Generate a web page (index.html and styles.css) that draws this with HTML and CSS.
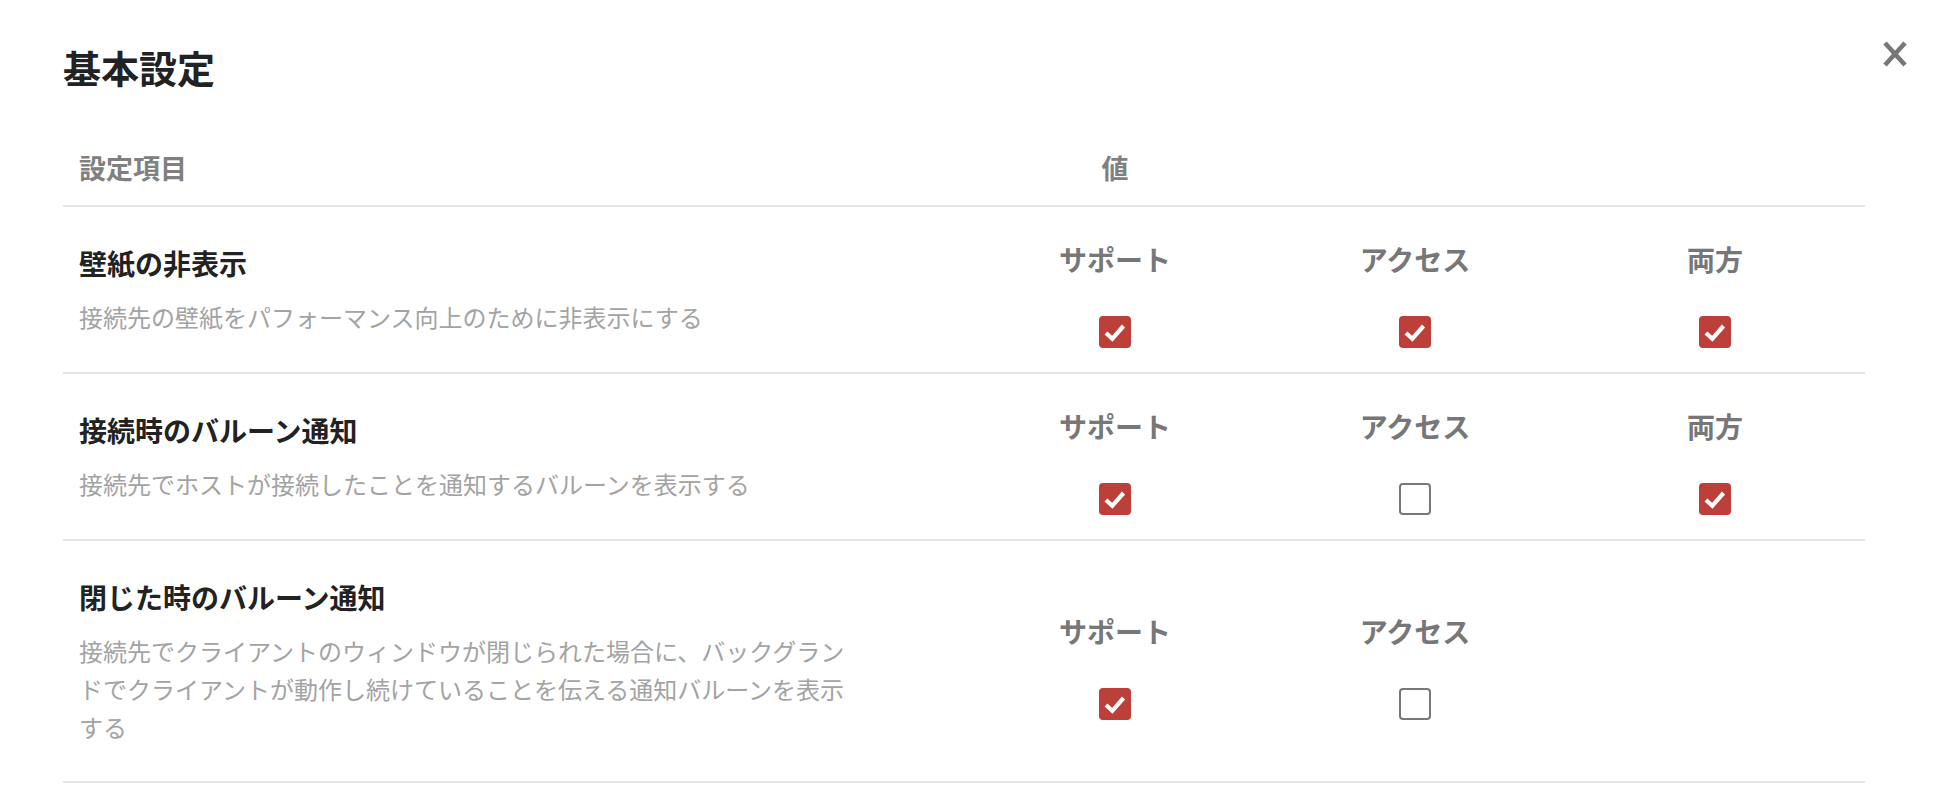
FILE: index.html
```html
<!DOCTYPE html>
<html lang="ja">
<head>
<meta charset="utf-8">
<title>基本設定</title>
<link rel="stylesheet" href="styles.css">
</head>
<body>
<div class="dialog">
  <button class="close" aria-label="閉じる">
    <svg width="24" height="26" viewBox="0 0 24 26"><path d="M2 2 L22 24 M22 2 L2 24" stroke="#777" stroke-width="4.6" fill="none"/></svg>
  </button>
  <h1 class="title">基本設定</h1>
  <div class="table">
    <div class="row head">
      <div class="hcell">設定項目</div>
      <div class="hcell center">値</div>
      <div></div>
      <div></div>
    </div>

    <div class="row">
      <div class="lcell">
        <div class="ltitle">壁紙の非表示</div>
        <div class="ldesc">接続先の壁紙をパフォーマンス向上のために非表示にする</div>
      </div>
      <div class="vcell"><div class="vlabel">サポート</div><span class="cb on"><svg viewBox="0 0 32 32"><path d="M7 17 L13.3 22.8 L24.5 10" stroke="#fff" stroke-width="4.2" fill="none"/></svg></span></div>
      <div class="vcell"><div class="vlabel">アクセス</div><span class="cb on"><svg viewBox="0 0 32 32"><path d="M7 17 L13.3 22.8 L24.5 10" stroke="#fff" stroke-width="4.2" fill="none"/></svg></span></div>
      <div class="vcell"><div class="vlabel">両方</div><span class="cb on"><svg viewBox="0 0 32 32"><path d="M7 17 L13.3 22.8 L24.5 10" stroke="#fff" stroke-width="4.2" fill="none"/></svg></span></div>
    </div>

    <div class="row">
      <div class="lcell">
        <div class="ltitle">接続時のバルーン通知</div>
        <div class="ldesc">接続先でホストが接続したことを通知するバルーンを表示する</div>
      </div>
      <div class="vcell"><div class="vlabel">サポート</div><span class="cb on"><svg viewBox="0 0 32 32"><path d="M7 17 L13.3 22.8 L24.5 10" stroke="#fff" stroke-width="4.2" fill="none"/></svg></span></div>
      <div class="vcell"><div class="vlabel">アクセス</div><span class="cb"></span></div>
      <div class="vcell"><div class="vlabel">両方</div><span class="cb on"><svg viewBox="0 0 32 32"><path d="M7 17 L13.3 22.8 L24.5 10" stroke="#fff" stroke-width="4.2" fill="none"/></svg></span></div>
    </div>

    <div class="row">
      <div class="lcell">
        <div class="ltitle">閉じた時のバルーン通知</div>
        <div class="ldesc">接続先でクライアントのウィンドウが閉じられた場合に、バックグランドでクライアントが動作し続けていることを伝える通知バルーンを表示する</div>
      </div>
      <div class="vcell"><div class="vlabel">サポート</div><span class="cb on"><svg viewBox="0 0 32 32"><path d="M7 17 L13.3 22.8 L24.5 10" stroke="#fff" stroke-width="4.2" fill="none"/></svg></span></div>
      <div class="vcell"><div class="vlabel">アクセス</div><span class="cb"></span></div>
      <div></div>
    </div>
  </div>
</div>
</body>
</html>
```

FILE: styles.css
```css
html, body {
  margin: 0;
  padding: 0;
  background: #fff;
}
body {
  font-family: "Noto Sans CJK JP", "Noto Sans", sans-serif;
  color: #222;
}
.dialog {
  position: relative;
  width: 1957px;
  height: 790px;
  box-sizing: border-box;
  padding: 38px 92px 0 63px;
}
.close {
  position: absolute;
  top: 41px;
  left: 1883px;
  width: 24px;
  height: 26px;
  padding: 0;
  border: 0;
  background: none;
  cursor: pointer;
}
.close svg {
  display: block;
}
.title {
  margin: 0;
  font-size: 38px;
  line-height: 57px;
  font-weight: 700;
  color: #222;
}
.table {
  margin-top: 36px;
  width: 1802px;
}
.row {
  display: grid;
  grid-template-columns: 902px 300px 300px 300px;
  border-bottom: 2px solid #e6e6e6;
}
.hcell {
  padding: 16px 16px;
  font-size: 27px;
  line-height: 42px;
  font-weight: 700;
  color: #808080;
}
.hcell.center {
  text-align: center;
  padding: 16px 0;
}
.lcell {
  align-self: start;
  padding: 35px 16px 35px;
}
.ltitle {
  font-size: 28px;
  line-height: 42px;
  font-weight: 700;
  color: #222;
}
.ldesc {
  margin-top: 14px;
  max-width: 780px;
  font-size: 24px;
  line-height: 38px;
  color: #a3a3a3;
}
.vcell {
  align-self: center;
  display: flex;
  flex-direction: column;
  align-items: center;
  padding: 31px 0 24px;
}
.vlabel {
  font-size: 28px;
  line-height: 42px;
  font-weight: 700;
  color: #777;
}
.cb {
  display: block;
  box-sizing: border-box;
  width: 32px;
  height: 32px;
  margin-top: 36px;
  border: 2.5px solid #777;
  border-radius: 4px;
  background: #fff;
}
.cb.on {
  border: 0;
  background: #bd3f3a;
}
.cb svg {
  display: block;
  width: 32px;
  height: 32px;
}
```
